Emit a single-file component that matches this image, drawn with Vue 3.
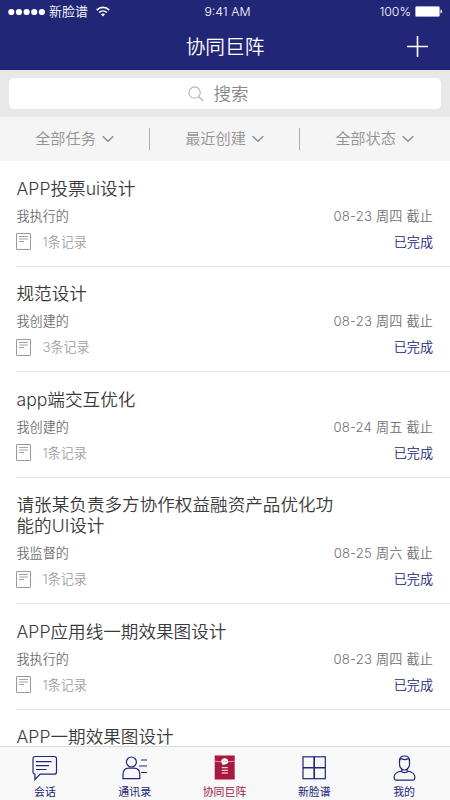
<script setup>
const filters = ['全部任务', '最近创建', '全部状态']

const tasks = [
  { title: 'APP投票ui设计', role: '我执行的', due: '08-23 周四 截止', records: 1 },
  { title: '规范设计', role: '我创建的', due: '08-23 周四 截止', records: 3 },
  { title: 'app端交互优化', role: '我创建的', due: '08-24 周五 截止', records: 1 },
  { title: '请张某负责多方协作权益融资产品优化功能的UI设计', role: '我监督的', due: '08-25 周六 截止', records: 1 },
  { title: 'APP应用线一期效果图设计', role: '我执行的', due: '08-23 周四 截止', records: 1 },
  { title: 'APP一期效果图设计' }
]

const tabs = [
  { id: 'chat', label: '会话' },
  { id: 'contacts', label: '通讯录' },
  { id: 'matrix', label: '协同巨阵', active: true },
  { id: 'apps', label: '新脸谱' },
  { id: 'me', label: '我的' }
]
</script>

<template>
  <div class="screen">
    <header class="header">
      <div class="status">
        <div class="carrier">
          <svg class="dots" width="37" height="8" viewBox="0 0 37 8" fill="#fff">
            <circle v-for="n in 5" :key="n" :cx="n * 7.65 - 4.35" cy="4" r="3.1" />
          </svg>
          <span class="carrier-name">新脸谱</span>
          <svg class="wifi" width="14" height="11" viewBox="0 0 14 11" fill="none" stroke="#fff" stroke-width="1.6">
            <path d="M0.7 4.1C4.3 .5 9.7 .5 13.3 4.1" />
            <path d="M3.1 6.5C5.3 4.4 8.7 4.4 10.9 6.5" />
            <path d="M4.9 8.3Q7 6.5 9.1 8.3L7 10.4Z" fill="#fff" stroke="none" />
          </svg>
        </div>
        <span class="time">9:41 AM</span>
        <div class="power">
          <span>100%</span>
          <svg width="27" height="11" viewBox="0 0 27 11">
            <rect x=".5" y=".5" width="24" height="10" rx="1.2" fill="#fff" stroke="#aaa9cf" />
            <path d="M25.5 3.5q1.5 0 1.5 2t-1.5 2z" fill="#fff" />
          </svg>
        </div>
      </div>
      <div class="navbar">
        <span></span>
        <h1>协同巨阵</h1>
        <svg class="plus" width="21" height="21" viewBox="0 0 21 21" stroke="#fff" stroke-width="1.6">
          <path d="M10.5 0v21M0 10.5h21" />
        </svg>
      </div>
    </header>

    <div class="search">
      <div class="search-box">
        <svg width="16" height="16" viewBox="0 0 16 16" fill="none" stroke="#b4b4b4" stroke-width="1.1">
          <circle cx="6.6" cy="6.6" r="5.7" />
          <path d="M10.7 10.7l4.5 4.3" stroke-width="1.4" />
        </svg>
        <span>搜索</span>
      </div>
    </div>

    <div class="filters">
      <div v-for="name in filters" :key="name" class="filter">
        <span>{{ name }}</span>
        <svg width="12" height="8" viewBox="0 0 12 8" fill="none" stroke="#8f8f8f" stroke-width="1.5">
          <path d="M.7 1.2L6 6.3l5.3-5.1" />
        </svg>
      </div>
    </div>

    <main class="list">
      <article v-for="task in tasks" :key="task.title" class="task">
        <h2>{{ task.title }}</h2>
        <div v-if="task.due" class="row role">
          <span>{{ task.role }}</span>
          <span class="due">{{ task.due }}</span>
        </div>
        <div v-if="task.records" class="row records">
          <svg width="15" height="17" viewBox="0 0 15 17" fill="none" stroke="#999">
            <rect x=".5" y=".5" width="14" height="16" rx=".5" />
            <path d="M3 3.5h9M3 6h9M3 8.5h5" stroke-width=".9" />
          </svg>
          <span class="count">{{ task.records }}条记录</span>
          <span class="done">已完成</span>
        </div>
      </article>
    </main>

    <nav class="tabs">
      <div v-for="tab in tabs" :key="tab.id" class="tab" :class="{ active: tab.active }">
        <svg v-if="tab.id === 'chat'" width="28" height="28" viewBox="0 0 28 28">
          <path d="M4.2 2.5h19q2.3 0 2.3 2.3v13.1q0 2.3-2.3 2.3H9.2L3.9 25.5v-5.3Q2 20 2 17.9V4.8q0-2.3 2.2-2.3z" />
          <path d="M5 7.7h15.5M5 11.6h13M5 15.5h10.5" />
        </svg>
        <svg v-else-if="tab.id === 'contacts'" width="28" height="28" viewBox="0 0 28 28">
          <circle cx="10.4" cy="8" r="5" />
          <path d="M2 24.6v-4.2q0-6.2 6-6.2h4.8q6 0 6 6.2v4.2z" />
          <path d="M20 6h6M18 12h8M20 18.5h6" />
        </svg>
        <svg v-else-if="tab.id === 'matrix'" width="28" height="28" viewBox="-.7 0 28 28">
          <rect x="4" y="1.5" width="20" height="24" class="fill" />
          <path d="M4 7.2q10 2 20 0" stroke="#e8a7b6" stroke-width=".9" />
          <path d="M14 4.2c2.2 0 3.6 1.4 3.6 3.1s-1.4 3.2-3.6 3.2l-2.3.8.1-1.4C9.5 8.1 10.4 4.2 14 4.2z" fill="#fff" stroke="none" />
          <path d="M11 13.7h6.2M11 16.3h6.2M11 19h6.2" stroke="#fff" stroke-width="1" />
          <path d="M12.3 7.3h3.6" stroke="#a8183f" stroke-width=".7" stroke-dasharray=".8 .6" />
        </svg>
        <svg v-else-if="tab.id === 'apps'" width="28" height="28" viewBox="0 0 28 28">
          <rect x="3" y="2.8" width="22.3" height="21.9" />
          <path d="M14.2 2.8v21.9M3 13.7h22.3" stroke-width="1.6" />
        </svg>
        <svg v-else width="28" height="28" viewBox="0 0 28 28">
          <path d="M9.5 6.2Q9.7 2 14.5 2t5 4.2v4c0 3.1-2.4 5.8-5 5.8s-5-2.7-5-5.8z" />
          <path d="M9.6 7c0-2 1-2.6 2.2-2.1 1.7.8 4.2.7 5.8 0 1.1-.5 1.8.5 1.9 2.1" />
          <path d="M11.9 15v2c-4.8.8-7.5 2-7.7 5.5-.1 2.7.5 3.6 2.3 3.6h16c1.8 0 2.4-.9 2.3-3.6-.2-3.5-2.9-4.7-7.7-5.5v-2M10.4 17.3q4.1 2.7 8.2 0" />
        </svg>
        <span>{{ tab.label }}</span>
      </div>
    </nav>
  </div>
</template>

<style>
body {
  margin: 0;
}
</style>

<style scoped>
.screen {
  width: 450px;
  height: 800px;
  display: flex;
  flex-direction: column;
  overflow: hidden;
  background: #fff;
  font-family: Inter, "Noto Sans CJK SC", sans-serif;
  font-weight: 350;
  color: #3a3a3a;
}
h1, h2 {
  margin: 0;
  font-weight: 350;
}
svg {
  display: block;
  flex: none;
}
.header {
  flex: none;
  height: 70px;
  background: #212677;
  color: #fff;
}
.status {
  display: grid;
  grid-template-columns: 1fr auto 1fr;
  align-items: center;
  height: 23px;
  padding: 0 8px;
  font-size: 12.3px;
  line-height: 23px;
}
.carrier, .power {
  display: flex;
  align-items: center;
}
.dots {
  margin-top: 1px;
}
.carrier-name {
  margin-left: 4px;
  font-size: 13px;
}
.wifi {
  margin-left: 8px;
}
.time {
  padding-left: 5px;
}
.power {
  justify-content: flex-end;
  gap: 4px;
}
.navbar {
  display: grid;
  grid-template-columns: 1fr auto 1fr;
  align-items: center;
  height: 47px;
  padding: 0 22px;
}
h1 {
  font-size: 19.7px;
  line-height: 46px;
}
.plus {
  justify-self: end;
}
.search {
  flex: none;
  box-sizing: border-box;
  height: 46.5px;
  padding: 8px 9px;
  background: #e8e8e8;
}
.search-box {
  display: flex;
  align-items: center;
  justify-content: center;
  gap: 10px;
  height: 31px;
  padding-right: 14px;
  border-radius: 5px;
  background: #fff;
  font-size: 17.5px;
  line-height: 31px;
  color: #888;
}
.filters {
  flex: none;
  display: grid;
  grid-template-columns: repeat(3, 1fr);
  align-items: center;
  height: 44.5px;
  background: #f5f5f5;
  color: #929292;
  font-size: 15.2px;
}
.filter {
  display: flex;
  align-items: center;
  justify-content: center;
  gap: 6px;
  height: 22px;
  line-height: 23px;
}
.filter:not(:last-child) {
  border-right: 1px solid #adadad;
}
.filter:last-child {
  padding-right: 1px;
}
.list {
  flex: 1;
  min-height: 0;
  overflow: hidden;
}
.task {
  margin-left: 16px;
  padding: 16.5px 17px 14px .5px;
  border-bottom: 1px solid #e6e6e6;
}
.task h2 {
  width: 322px;
  font-size: 17.6px;
  line-height: 21px;
}
.row {
  display: flex;
  align-items: center;
  height: 20px;
  font-size: 13.1px;
  line-height: 20px;
}
.role {
  margin-top: 7px;
  color: #707070;
}
.due {
  margin-left: auto;
  letter-spacing: .2px;
}
.records {
  margin-top: 6px;
}
.records svg {
  margin-left: -.5px;
}
.count {
  margin-left: 11.5px;
  color: #a0a0a0;
}
.done {
  margin-left: auto;
  color: #212677;
}
.tabs {
  flex: none;
  box-sizing: border-box;
  display: grid;
  grid-template-columns: repeat(5, 1fr);
  height: 54.5px;
  padding-right: 1px;
  border-top: 1px solid #d9d9d9;
  background: #f8f8f8;
}
.tab {
  display: flex;
  flex-direction: column;
  align-items: center;
  padding-top: 7px;
  color: #212677;
  font-size: 10.9px;
  line-height: 15px;
  font-weight: 400;
}
.tab svg {
  fill: none;
  stroke: #212677;
  stroke-width: 1.2;
  margin-bottom: 3.5px;
}
.tab .fill {
  fill: #a8183f;
  stroke: none;
}
.active {
  color: #9c2146;
}
</style>
